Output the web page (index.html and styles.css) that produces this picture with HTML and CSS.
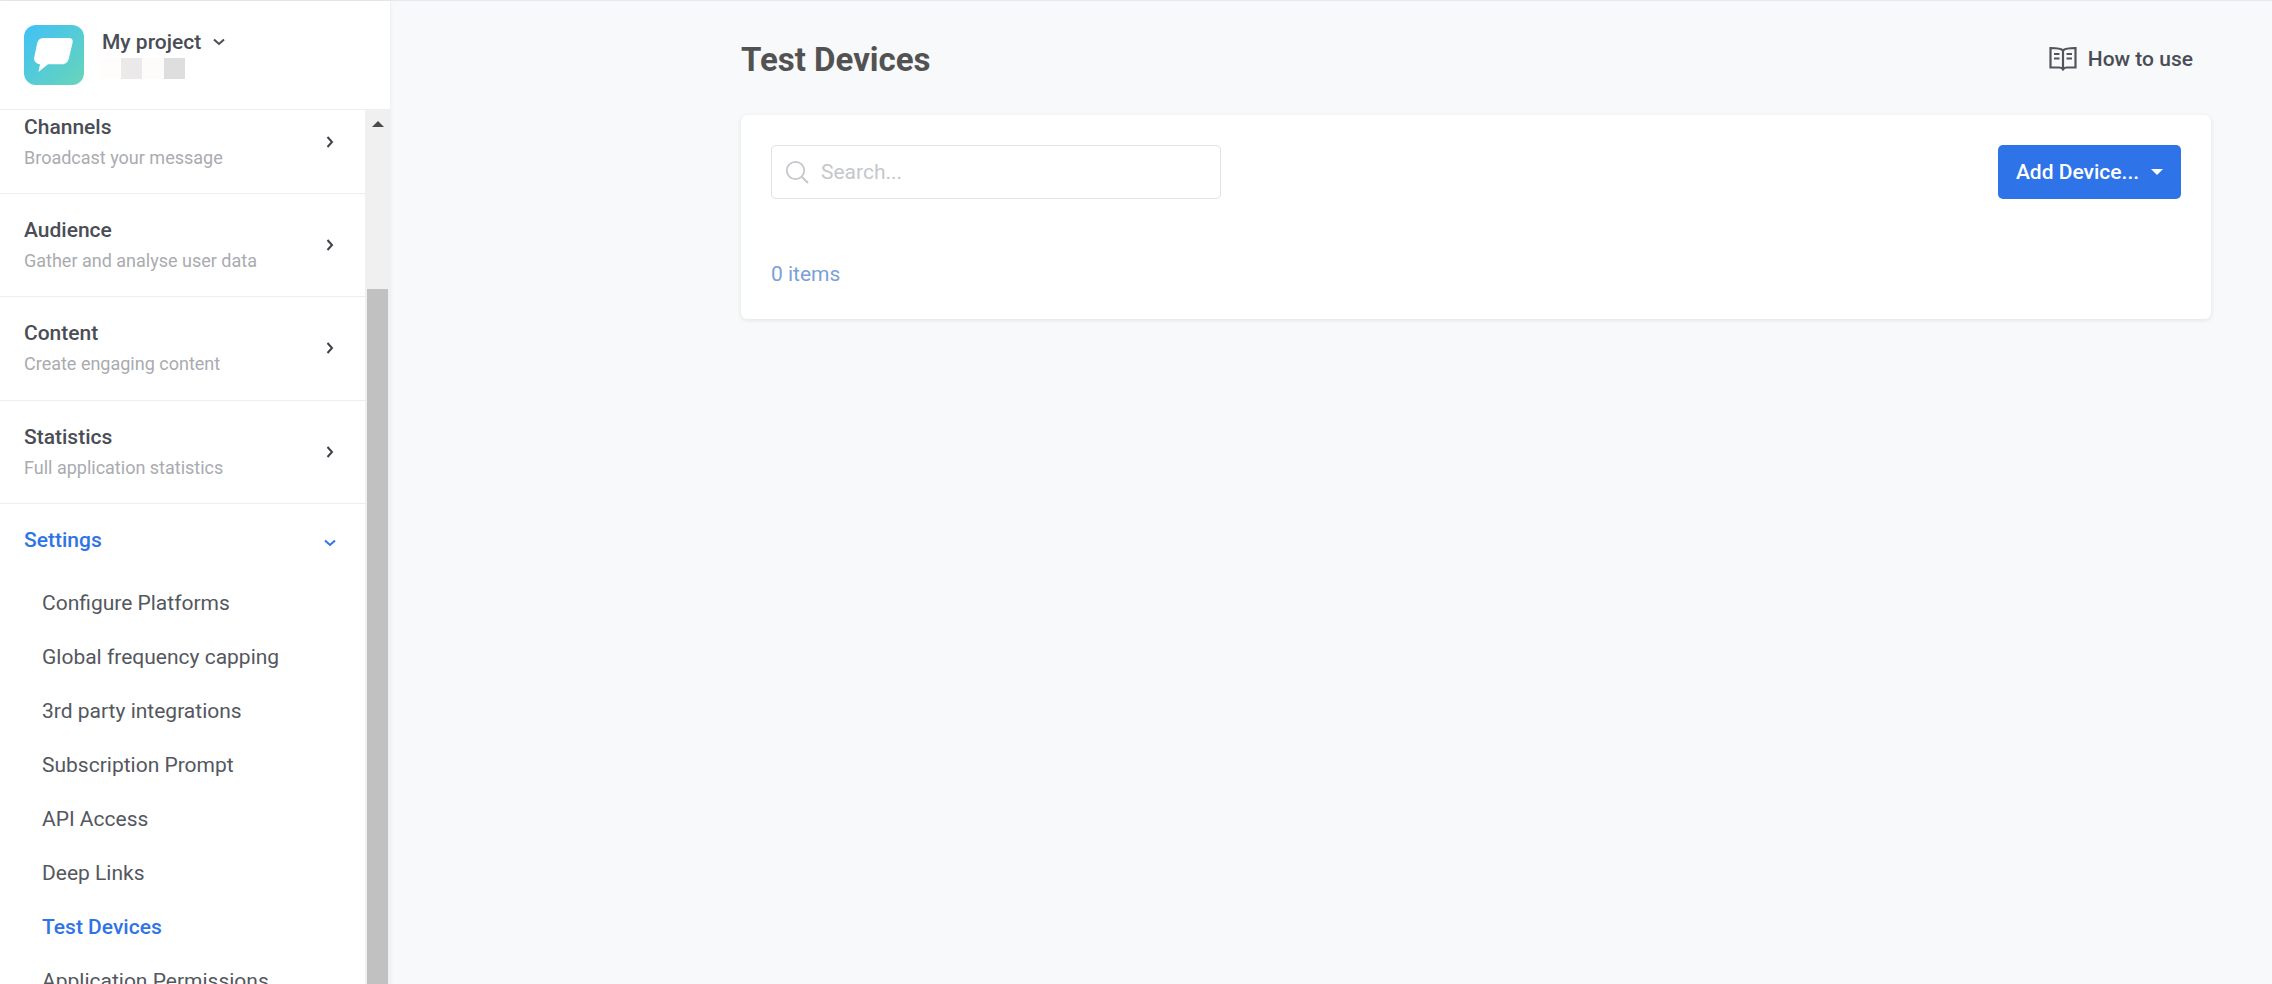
FILE: index.html
```html
<!DOCTYPE html>
<html lang="en">
<head>
  <meta charset="UTF-8">
  <meta name="viewport" content="width=device-width, initial-scale=1.0">
  <title>Test Devices</title>
  <link rel="stylesheet" href="styles.css">
</head>
<body>
  <div class="app">
    <aside class="sidebar">
      <div class="project">
        <svg class="logo" viewBox="0 0 60 60">
          <defs>
            <linearGradient id="logo-grad" x1="0" y1="0" x2="1" y2="1">
              <stop offset="0" stop-color="#3fc1f6"/>
              <stop offset="1" stop-color="#69d5b9"/>
            </linearGradient>
          </defs>
          <rect width="60" height="60" rx="12" fill="url(#logo-grad)"/>
          <path d="M19 13h26c3 0 4.200 2 3.600 4.500L45 33c-.8 3.800-3.200 6.300-6.800 6.300H24L14.500 47l1.500-7.800C12 38.600 9.600 36 10.200 32.500L13 19C13.800 15 16 13 19 13z" fill="#fff"/>
        </svg>
        <div class="project-info">
          <div class="project-name">
            My project
            <svg class="project-caret" viewBox="0 0 12 8"><path d="M1 1.500 6 6l5-4.500" fill="none" stroke="#4a4d55" stroke-width="2"/></svg>
          </div>
          <div class="project-id">
            <span class="blur-a"></span><span class="blur-b"></span><span class="blur-c"></span><span class="blur-d"></span>
          </div>
        </div>
      </div>

      <div class="menu-wrap">
        <nav class="menu">
          <div class="menu-item menu-item-cut">
            <div>
              <div class="menu-title">Channels</div>
              <div class="menu-sub">Broadcast your message</div>
            </div>
            <svg class="chevron" viewBox="0 0 8 12"><path d="M1.500 1 6 6l-4.500 5" fill="none" stroke="#3f424a" stroke-width="2"/></svg>
          </div>
          <div class="menu-item">
            <div>
              <div class="menu-title">Audience</div>
              <div class="menu-sub">Gather and analyse user data</div>
            </div>
            <svg class="chevron" viewBox="0 0 8 12"><path d="M1.500 1 6 6l-4.500 5" fill="none" stroke="#3f424a" stroke-width="2"/></svg>
          </div>
          <div class="menu-item">
            <div>
              <div class="menu-title">Content</div>
              <div class="menu-sub">Create engaging content</div>
            </div>
            <svg class="chevron" viewBox="0 0 8 12"><path d="M1.500 1 6 6l-4.500 5" fill="none" stroke="#3f424a" stroke-width="2"/></svg>
          </div>
          <div class="menu-item">
            <div>
              <div class="menu-title">Statistics</div>
              <div class="menu-sub">Full application statistics</div>
            </div>
            <svg class="chevron" viewBox="0 0 8 12"><path d="M1.500 1 6 6l-4.500 5" fill="none" stroke="#3f424a" stroke-width="2"/></svg>
          </div>
          <div class="menu-open">
            <div class="menu-open-head">
              <div class="menu-title active">Settings</div>
              <svg class="chevron-down" viewBox="0 0 12 8"><path d="M1 1.500 6 6l5-4.500" fill="none" stroke="#2f73e8" stroke-width="2"/></svg>
            </div>
            <a class="sub-link">Configure Platforms</a>
            <a class="sub-link">Global frequency capping</a>
            <a class="sub-link">3rd party integrations</a>
            <a class="sub-link">Subscription Prompt</a>
            <a class="sub-link">API Access</a>
            <a class="sub-link">Deep Links</a>
            <a class="sub-link active">Test Devices</a>
            <a class="sub-link">Application Permissions</a>
          </div>
        </nav>
        <div class="scrollbar">
          <div class="scroll-arrow"></div>
          <div class="scroll-thumb"></div>
        </div>
      </div>
    </aside>

    <main class="content">
      <div class="page-head">
        <h1>Test Devices</h1>
        <a class="how-to">
          <svg class="book" viewBox="0 0 28 26">
            <path d="M14 4.500C12.500 2.800 10 2 1.500 2v19.500H10c2 0 3.300.7 4 1.800.7-1.100 2-1.800 4-1.800h8.500V2C18 2 15.500 2.800 14 4.500zM14 4.500v18.800" fill="none" stroke="#50545c" stroke-width="2.200"/>
            <path d="M5 8h5.500M5 12.500h5.500M17.500 8H23M17.500 12.500H23" fill="none" stroke="#50545c" stroke-width="2.200"/>
          </svg>
          How to use
        </a>
      </div>

      <section class="card">
        <div class="card-top">
          <div class="search">
            <svg class="search-icon" viewBox="0 0 24 24">
              <circle cx="10.500" cy="10.500" r="8.700" fill="none" stroke="#c5c7cc" stroke-width="1.800"/>
              <path d="M17 17l6 6" fill="none" stroke="#c5c7cc" stroke-width="2"/>
            </svg>
            <span class="placeholder">Search...</span>
          </div>
          <button class="add-btn">Add Device...<span class="btn-caret"></span></button>
        </div>
        <div class="count">0 items</div>
      </section>
    </main>
  </div>
</body>
</html>
```

FILE: styles.css
```css
html, body {
  margin: 0;
  padding: 0;
  height: 100%;
  overflow: hidden;
}

body {
  font-family: Roboto, Arial, sans-serif;
  background: #f8f9fb;
  color: #4a4d55;
}

.app {
  display: flex;
  height: 100vh;
  border-top: 1px solid #e9e6ef;
  box-sizing: border-box;
}

/* Sidebar */
.sidebar {
  width: 390px;
  flex: none;
  display: flex;
  flex-direction: column;
  background: #fff;
  box-shadow: 1px 0 3px rgba(0, 0, 0, 0.05);
}

.project {
  height: 109px;
  flex: none;
  box-sizing: border-box;
  padding: 24px 24px 0;
  display: flex;
  gap: 18px;
  border-bottom: 1px solid #eeeeef;
}

.logo {
  width: 60px;
  height: 60px;
  flex: none;
}

.project-name {
  font-size: 21px;
  font-weight: 500;
  line-height: 24px;
  margin-top: 5px;
  display: flex;
  align-items: center;
  gap: 12px;
}

.project-caret {
  width: 12px;
  height: 8px;
}

.project-id {
  display: flex;
  margin: 4px 0 0 -2px;
}

.project-id span {
  width: 21px;
  height: 21px;
}

.blur-a { background: #fffdfc; }
.blur-b { background: #ebe9e9; }
.project-id .blur-c { background: #fdfcfb; width: 22px; }
.blur-d { background: #dedede; }

.menu-wrap {
  flex: 1;
  min-height: 0;
  display: flex;
}

.menu {
  flex: 1;
  min-width: 0;
  overflow: hidden;
}

.menu-item {
  height: 103.33px;
  box-sizing: border-box;
  padding: 0 31px 0 24px;
  display: flex;
  align-items: center;
  justify-content: space-between;
  border-bottom: 1px solid #eeeeef;
}

.menu-item-cut {
  height: 84px;
  padding-bottom: 19px;
}

.menu-title {
  font-size: 21px;
  font-weight: 500;
  line-height: 26px;
  color: #4a4d55;
}

.menu-title.active {
  color: #2f73e8;
}

.menu-sub {
  font-size: 18px;
  line-height: 24px;
  margin-top: 6px;
  color: #a9abb0;
}

.chevron {
  width: 8px;
  height: 12px;
}

.menu-open-head {
  height: 72px;
  padding: 0 31px 0 24px;
  display: flex;
  align-items: center;
  justify-content: space-between;
}

.chevron-down {
  width: 12px;
  height: 8px;
  margin-right: -2px;
  margin-top: 6px;
}

.sub-link {
  display: block;
  height: 54px;
  line-height: 54px;
  padding-left: 42px;
  font-size: 21px;
  color: #54575e;
}

.sub-link.active {
  color: #2f73e8;
  font-weight: 500;
}

.scrollbar {
  width: 25px;
  flex: none;
  background: #f0f0f0;
  display: flex;
  flex-direction: column;
  box-sizing: border-box;
  padding: 0 2px;
}

.scroll-arrow {
  width: 0;
  height: 0;
  margin: 11px auto 0;
  border-left: 6px solid transparent;
  border-right: 6px solid transparent;
  border-bottom: 6px solid #4b4b4b;
}

.scroll-thumb {
  flex: 1;
  margin-top: 162px;
  background: #c1c1c1;
}

/* Main area */
.content {
  flex: 1;
  min-width: 0;
  padding: 0 61px 0 351px;
}

.page-head {
  height: 114px;
  display: flex;
  align-items: center;
  justify-content: space-between;
  padding-top: 2px;
  box-sizing: border-box;
}

h1 {
  margin: 0;
  font-size: 33px;
  font-weight: 700;
  color: #525252;
}

.how-to {
  display: flex;
  align-items: center;
  gap: 11px;
  margin-right: 18px;
  font-size: 21px;
  font-weight: 500;
  color: #4a4d55;
}

.book {
  width: 28px;
  height: 26px;
}

.card {
  height: 204px;
  box-sizing: border-box;
  padding: 30px 30px 0;
  background: #fff;
  border-radius: 6px;
  box-shadow: 0 1px 4px rgba(0, 0, 0, 0.1);
}

.card-top {
  display: flex;
  justify-content: space-between;
}

.search {
  width: 450px;
  height: 54px;
  box-sizing: border-box;
  padding: 0 13px;
  display: flex;
  align-items: center;
  gap: 12px;
  border: 1px solid #e1e2e8;
  border-radius: 5px;
}

.search-icon {
  width: 24px;
  height: 24px;
}

.placeholder {
  font-size: 21px;
  color: #c5c7cc;
}

.add-btn {
  width: 183px;
  height: 54px;
  padding: 0;
  border: none;
  border-radius: 5px;
  background: #2f73e8;
  color: #fff;
  font-family: inherit;
  font-size: 21px;
  font-weight: 500;
  display: flex;
  align-items: center;
  justify-content: center;
  gap: 12px;
}

.btn-caret {
  width: 0;
  height: 0;
  border-left: 6px solid transparent;
  border-right: 6px solid transparent;
  border-top: 6px solid #fff;
}

.count {
  margin-top: 63px;
  font-size: 21px;
  line-height: 24px;
  color: #7ba0d8;
}
```
